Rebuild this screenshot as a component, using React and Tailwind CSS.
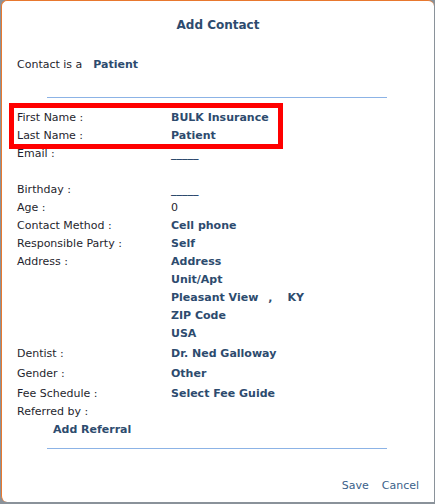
import React from "react";

const rows = [
  { label: "First Name :", value: "BULK Insurance" },
  { label: "Last Name :", value: "Patient" },
];

function Row({ label, children, className = "h-[18px]" }) {
  return (
    <div className={`flex ${className}`}>
      <div className="w-[154px] shrink-0 text-[#1f1f2e]">{label}</div>
      <div className="font-bold text-[#2d4b6e]">{children}</div>
    </div>
  );
}

export default function App() {
  return (
    <div className="w-[435px] h-[504px] bg-[#8a929a] overflow-hidden font-['DejaVu_Sans',Verdana,sans-serif] text-[11px] leading-[18px]">
      <div className="relative ml-px w-[433px] h-[502px] bg-white border-l border-t border-[#e8782e] rounded-tl-md rounded-tr-md rounded-bl-md">
        {/* title */}
        <div className="pt-[16px] text-center text-[12px] leading-4 font-bold text-[#2d4b6e]">
          Add Contact
        </div>

        <div className="mt-[23px] pl-[15px] flex text-[#1f1f2e]">
          <span>Contact is a</span>
          <span className="ml-[11px] font-bold text-[#2d4b6e]">Patient</span>
        </div>

        <div className="mt-[23px] ml-[45px] w-[340px] h-px bg-[#8cb3e6]" />

        <div className="mt-[11px] pl-[15px]">
          {rows.map((r) => (
            <Row key={r.label} label={r.label}>
              {r.value}
            </Row>
          ))}
          <Row label="Email :" className="h-[36px]">
            _____
          </Row>
          <Row label="Birthday :">_____</Row>
          <Row label="Age :">
            <span className="font-normal text-[#1f1f2e]">0</span>
          </Row>
          <Row label="Contact Method :">Cell phone</Row>
          <Row label="Responsible Party :">Self</Row>
          <Row label="Address :" className="h-[92px]">
            <div className="flex flex-col">
              <span>Address</span>
              <span>Unit/Apt</span>
              <span>
                Pleasant View<span className="ml-[10px]">,</span>
                <span className="ml-[15px]">KY</span>
              </span>
              <span>ZIP Code</span>
              <span>USA</span>
            </div>
          </Row>
          <Row label="Dentist :" className="h-[20px]">
            Dr. Ned Galloway
          </Row>
          <Row label="Gender :" className="h-[20px]">
            Other
          </Row>
          <Row label="Fee Schedule :" className="h-[18px]">
            Select Fee Guide
          </Row>
          <div className="text-[#1f1f2e]">Referred by :</div>
          <div className="pl-[36px] font-bold text-[#2d4b6e]">Add Referral</div>
        </div>

        <div className="mt-[9px] ml-[45px] w-[340px] h-px bg-[#8cb3e6]" />

        <div className="mt-[28px] pr-[15px] flex justify-end gap-[13px] text-[#3a5f8a]">
          <span>Save</span>
          <span>Cancel</span>
        </div>

        {/* annotation highlight */}
        <div className="absolute left-[7px] top-[102px] w-[274px] h-[46px] border-[5px] border-[#ff0000]" />
      </div>
    </div>
  );
}
